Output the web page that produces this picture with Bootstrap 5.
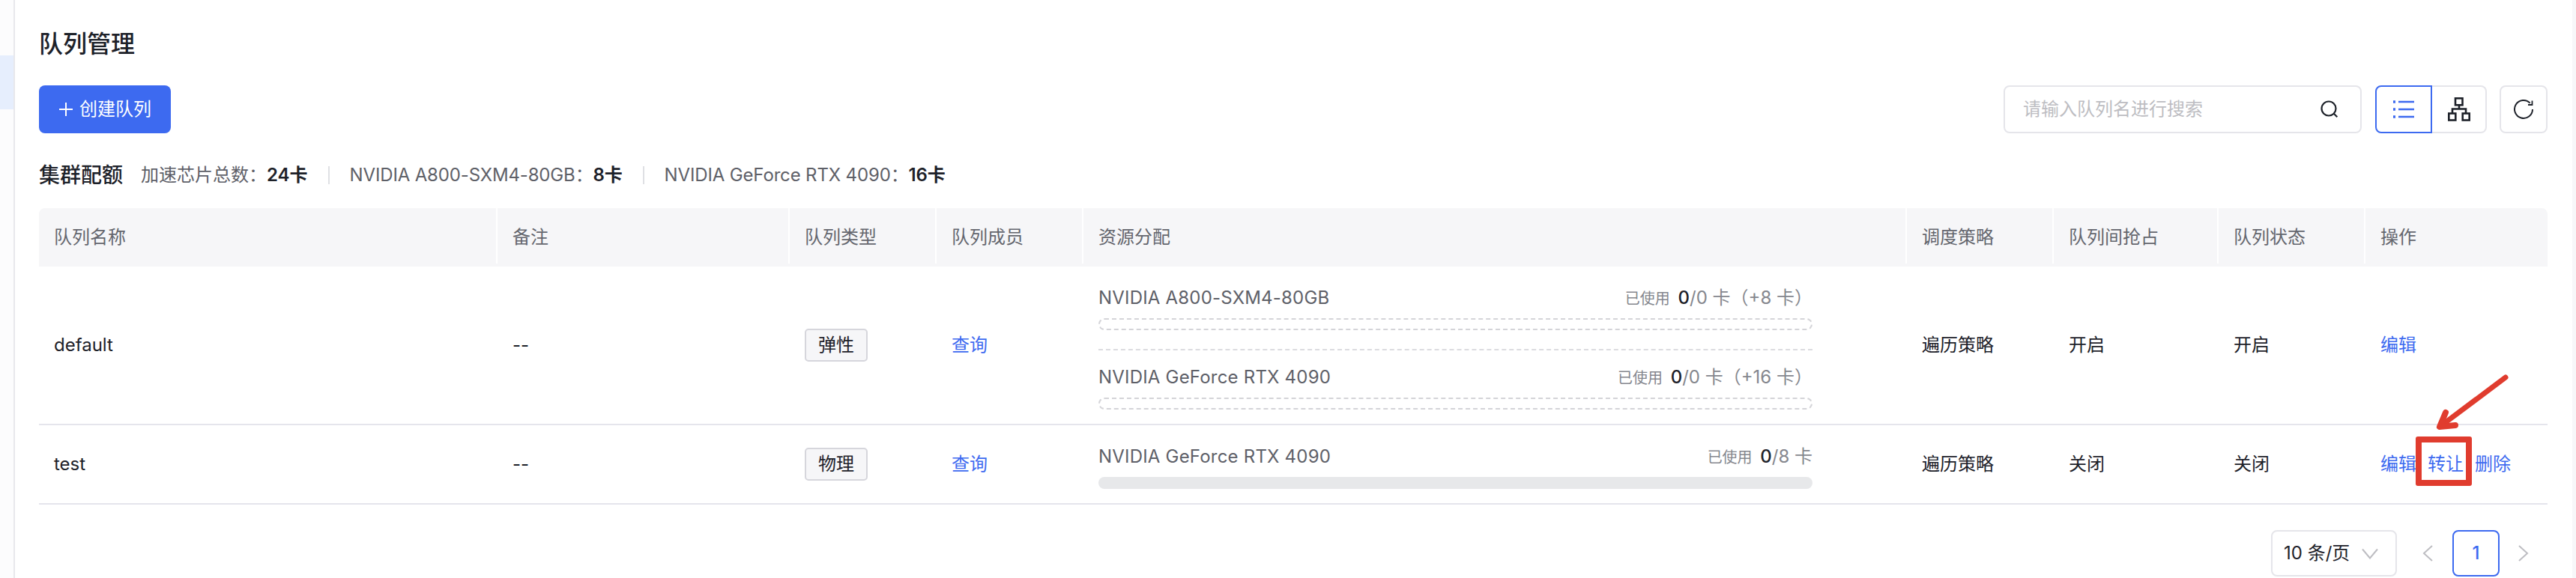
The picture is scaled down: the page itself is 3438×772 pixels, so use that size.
<!DOCTYPE html>
<html lang="zh-CN">
<head>
<meta charset="utf-8">
<title>队列管理</title>
<link href="https://cdn.jsdelivr.net/npm/bootstrap@5.3.0/dist/css/bootstrap.min.css" rel="stylesheet">
<style>
html,body{height:772px;overflow:hidden;background:#fff}
body{font-family:Inter,"Noto Sans CJK SC",sans-serif;font-size:24px;color:#1d2129}
.shell{height:772px}
.siderail{width:20px;flex:none;border-right:2px solid #e8e8ec;padding-top:74px;background:#fcfcfd}
.siderail-active{height:72px;background:#e6eefd}
.pane{width:3413px;flex:none;padding:43px 33px 0 32px;position:relative}
.edge{flex:1;background:#f7f7f9}
.page-title{font-size:32px;line-height:32px;font-weight:500;margin:0 0 39px}
.toolbar{height:64px;margin-bottom:42px}
.create-btn{width:176px;height:64px;background:#3d6af0;border:0;border-radius:8px;color:#fff;font-size:24px;padding:0;gap:8px}
.search-box{width:478px;height:64px;border:2px solid #e5e5ea;border-radius:8px;padding:0 28px 0 24px;color:#bdbdc2;margin-right:18px}
.view-btn{width:76px;height:64px;border:2px solid #e5e5ea;background:#fff;padding:0}
.view-left{border:2px solid #3d6af0;border-radius:8px 0 0 8px}
.view-right{border-left:0;border-radius:0 8px 8px 0;width:73px}
.refresh-btn{width:64px;height:64px;border:2px solid #e5e5ea;border-radius:8px;background:#fff;padding:0;margin-left:17px}
.quota{height:28px;line-height:28px;margin-bottom:30px;color:#5e6068}
.quota-title{font-size:28px;font-weight:500;color:#1d2129;margin-right:24px}
.quota b{font-weight:600;color:#1d2129}
.quota-latin{letter-spacing:-.15px}
.quota-sep{width:2px;height:24px;background:#dfe0e4;margin:0 27px}
.queue-table{table-layout:fixed;width:3348px;margin:0;--bs-table-bg:transparent;font-size:24px;color:#1d2129}
.queue-table col:nth-child(1){width:610px}
.queue-table col:nth-child(2){width:390px}
.queue-table col:nth-child(3){width:196px}
.queue-table col:nth-child(4){width:196px}
.queue-table col:nth-child(5){width:1099px}
.queue-table col:nth-child(6){width:196px}
.queue-table col:nth-child(7){width:220px}
.queue-table col:nth-child(8){width:196px}
.queue-table col:nth-child(9){width:245px}
.queue-table th{height:78px;background:#f6f6f8;font-weight:400;color:#64666e;padding:0 0 0 22px;border:0;vertical-align:middle;position:relative}
.queue-table th:first-child,.queue-table td:first-child{padding-left:20px}
.queue-table th:first-child{border-top-left-radius:8px}
.queue-table th:last-child{border-top-right-radius:8px}
.queue-table th+th::before{content:"";position:absolute;left:0;top:0;bottom:4px;width:2px;background:#fff}
.queue-table td{padding:0 0 0 22px;border-bottom:2px solid #e5e5ec;vertical-align:middle}
.row-one{height:211px}
.row-two{height:106px}
.kind-tag{display:inline-block;width:84px;height:44px;line-height:40px;text-align:center;background:#f6f6f8;border:2px solid #d6d6dc;border-radius:5px}
.blue-link{color:#3d6af0;text-decoration:none}
.res-wrap{width:953px;padding-top:8px}
.res-head{height:30px;line-height:30px;color:#5e6068}
.res-name{letter-spacing:.2px}
.res-used{font-size:20px;color:#85878e}
.res-used b{font-size:24px;font-weight:500;color:#1d2129;margin-left:5px}
.res-used span{font-size:24px}
.bar-dashed{height:16px;border:2px dashed #d4d4d8;border-radius:8px;margin-top:12px}
.bar-solid{height:16px;background:#e7e8ea;border-radius:8px;margin-top:12px}
.res-split{border-top:2px dashed #dcdce0;margin:25px 0 21px}
.ops{gap:15px}
.pager{margin-top:34px;height:62px;padding-right:16px}
.size-select{width:168px;height:62px;border:2px solid #e5e5ea;border-radius:8px;padding:0 23px 0 15px}
.page-num{width:63px;height:62px;border:2px solid #3d6af0;border-radius:8px;color:#3d6af0;font-weight:500;margin:0 16px 0 17px}
.page-arrow{width:32px}
.page-prev{margin-left:25px}
.mark-box{position:absolute;left:3204px;top:583px;width:75px;height:66px;border:8px solid #e03c2e;border-radius:3px}
.mark-arrow{position:absolute;left:3220px;top:495px}
</style>
</head>
<body>
<div class="shell d-flex">
  <div class="siderail"><div class="siderail-active"></div></div>
  <main class="pane">
    <h1 class="page-title">队列管理</h1>
    <div class="toolbar d-flex align-items-center justify-content-between">
      <button class="create-btn btn d-flex align-items-center justify-content-center">
        <svg width="20" height="20" viewBox="0 0 20 20"><path d="M10 1v18M1 10h18" stroke="#fff" stroke-width="2"/></svg>
        <span>创建队列</span>
      </button>
      <div class="d-flex align-items-center">
        <div class="search-box d-flex align-items-center justify-content-between">
          <span>请输入队列名进行搜索</span>
          <svg width="26" height="26" viewBox="0 0 26 26" fill="none" stroke="#1d2129" stroke-width="2.2"><circle cx="12" cy="12" r="9.5"/><path d="M18.8 18.8l4.5 4.5"/></svg>
        </div>
        <button class="view-btn view-left d-flex align-items-center justify-content-center">
          <svg width="30" height="24" viewBox="0 0 30 24" fill="none" stroke="#3d6af0" stroke-width="2.4"><path d="M8 2h21M8 12h21M8 22h21"/><path d="M1 2h3M1 12h3M1 22h3" stroke-width="3.4"/></svg>
        </button>
        <button class="view-btn view-right d-flex align-items-center justify-content-center">
          <svg width="30" height="32" viewBox="0 0 30 32" fill="none" stroke="#1d2129" stroke-width="2.6"><rect x="10" y="1.300" width="9.500" height="9"/><rect x="1.300" y="21.500" width="9" height="9"/><rect x="19.700" y="21.500" width="9" height="9"/><path d="M15 10.300v5M6 21.500v-6h18v6"/></svg>
        </button>
        <button class="refresh-btn d-flex align-items-center justify-content-center">
          <svg width="28" height="28" viewBox="0 0 28 28" fill="none" stroke="#1d2129" stroke-width="2"><path d="M26 14A12 12 0 1 1 22.600 5.600"/><path d="M25.500 2.500V8H20" stroke-width="1.800"/></svg>
        </button>
      </div>
    </div>
    <div class="quota d-flex align-items-center">
      <span class="quota-title">集群配额</span>
      <span>加速芯片总数：<b>24卡</b></span>
      <span class="quota-sep"></span>
      <span class="quota-latin">NVIDIA A800-SXM4-80GB：<b>8卡</b></span>
      <span class="quota-sep"></span>
      <span class="quota-latin">NVIDIA GeForce RTX 4090：<b>16卡</b></span>
    </div>
    <table class="table queue-table">
      <colgroup><col><col><col><col><col><col><col><col><col></colgroup>
      <thead><tr><th>队列名称</th><th>备注</th><th>队列类型</th><th>队列成员</th><th>资源分配</th><th>调度策略</th><th>队列间抢占</th><th>队列状态</th><th>操作</th></tr></thead>
      <tbody>
        <tr class="row-one">
          <td>default</td><td>--</td><td><span class="kind-tag">弹性</span></td><td><a class="blue-link" href="#">查询</a></td>
          <td>
            <div class="res-wrap">
              <div class="res-head d-flex justify-content-between"><span class="res-name">NVIDIA A800-SXM4-80GB</span><span class="res-used">已使用 <b>0</b><span>/0 卡（+8 卡）</span></span></div>
              <div class="bar-dashed"></div>
              <div class="res-split"></div>
              <div class="res-head d-flex justify-content-between"><span class="res-name">NVIDIA GeForce RTX 4090</span><span class="res-used">已使用 <b>0</b><span>/0 卡（+16 卡）</span></span></div>
              <div class="bar-dashed"></div>
            </div>
          </td>
          <td>遍历策略</td><td>开启</td><td>开启</td><td><a class="blue-link" href="#">编辑</a></td>
        </tr>
        <tr class="row-two">
          <td>test</td><td>--</td><td><span class="kind-tag">物理</span></td><td><a class="blue-link" href="#">查询</a></td>
          <td>
            <div class="res-wrap">
              <div class="res-head d-flex justify-content-between"><span class="res-name">NVIDIA GeForce RTX 4090</span><span class="res-used">已使用 <b>0</b><span>/8 卡</span></span></div>
              <div class="bar-solid"></div>
            </div>
          </td>
          <td>遍历策略</td><td>关闭</td><td>关闭</td>
          <td><div class="ops d-flex"><a class="blue-link" href="#">编辑</a><a class="blue-link" href="#">转让</a><a class="blue-link" href="#">删除</a></div></td>
        </tr>
      </tbody>
    </table>
    <div class="pager d-flex justify-content-end align-items-center">
      <div class="size-select d-flex align-items-center justify-content-between">
        <span>10 条/页</span>
        <svg width="22" height="15" viewBox="0 0 22 15" fill="none" stroke="#bdbdc2" stroke-width="2"><path d="M1 1.500l10 12 10-12"/></svg>
      </div>
      <div class="page-arrow page-prev d-flex justify-content-center"><svg width="14" height="22" viewBox="0 0 14 22" fill="none" stroke="#bdbdc2" stroke-width="2"><path d="M13 1L2 11l11 10"/></svg></div>
      <div class="page-num d-flex align-items-center justify-content-center">1</div>
      <div class="page-arrow d-flex justify-content-center"><svg width="14" height="22" viewBox="0 0 14 22" fill="none" stroke="#bdbdc2" stroke-width="2"><path d="M1 1l11 10L1 21"/></svg></div>
    </div>
    <div class="mark-box"></div>
    <svg class="mark-arrow" width="130" height="85" viewBox="0 0 130 85" fill="none" stroke="#e03c2e" stroke-width="7" stroke-linecap="round" stroke-linejoin="round"><path d="M104 9L20 72"/><path d="M24 56L16 75L37 73" stroke-width="8"/></svg>
  </main>
  <div class="edge"></div>
</div>
<script src="https://cdn.jsdelivr.net/npm/bootstrap@5.3.0/dist/js/bootstrap.bundle.min.js"></script>
</body>
</html>
